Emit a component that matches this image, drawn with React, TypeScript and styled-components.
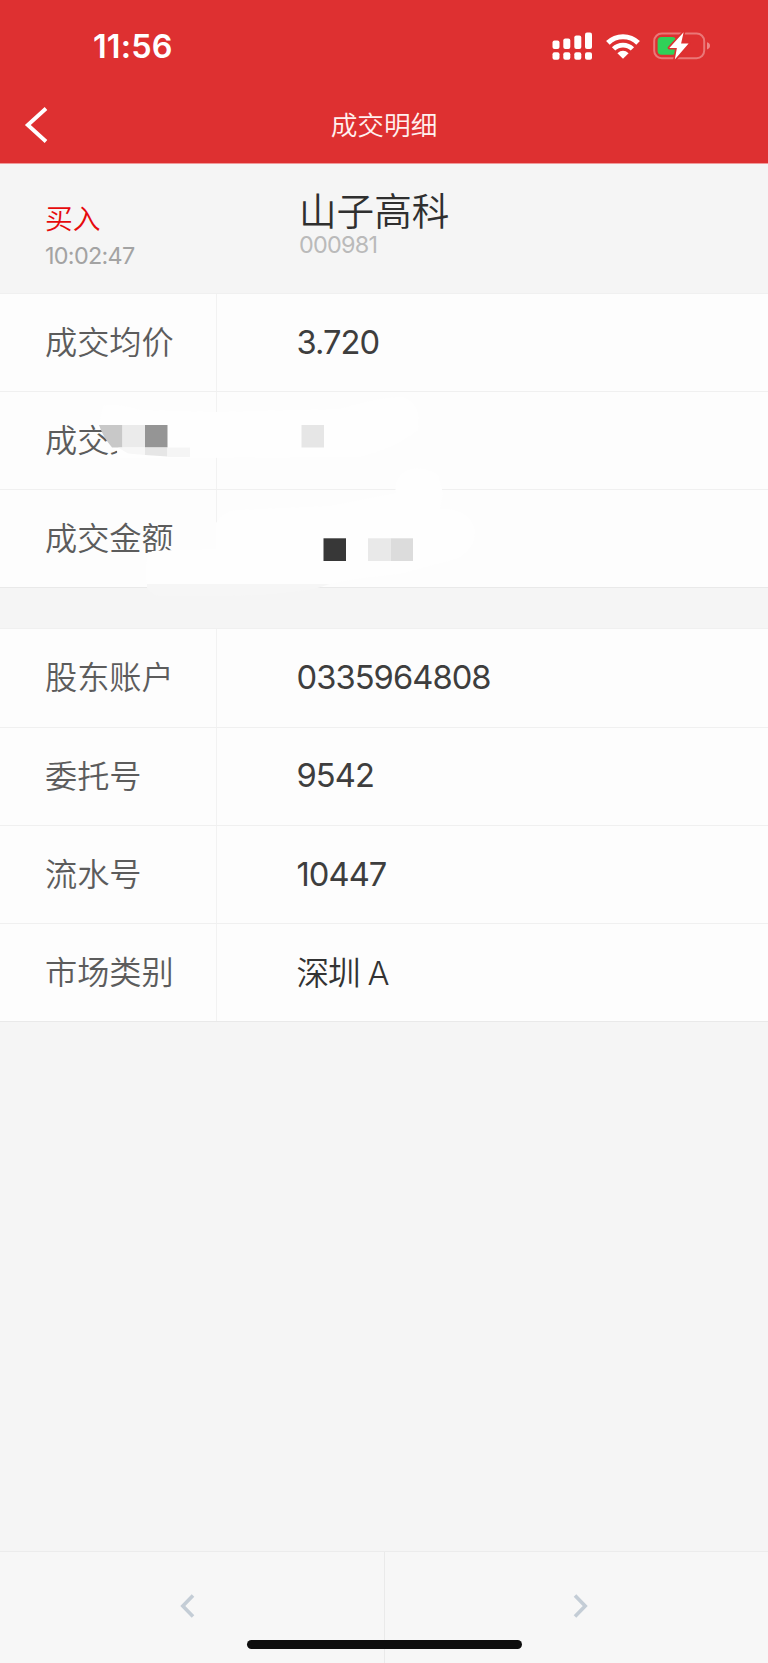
import React from "react";
import styled, { createGlobalStyle } from "styled-components";

const GlobalStyle = createGlobalStyle`
  body {
    margin: 0;
    background: #f5f5f5;
    font-family: Inter, "Noto Sans CJK SC", sans-serif;
  }
`;

const Screen = styled.div`
  display: flex;
  flex-direction: column;
  width: 768px;
  height: 1663px;
  overflow: hidden;
  background: #f5f5f5;
`;

const TopBar = styled.header`
  flex: none;
  height: 164px;
  color: #fff;
  background: #de3031;
  border-bottom: 1px solid #f09a9a;
  box-sizing: border-box;
`;

const StatusBar = styled.div`
  display: flex;
  align-items: center;
  justify-content: space-between;
  height: 92px;
  padding: 0 58px 0 93px;
  box-sizing: border-box;
`;

const Clock = styled.span`
  padding-top: 2px;
  font-size: 32.4px;
  font-weight: 600;
  letter-spacing: 0.15px;
  line-height: 40px;
`;

const StatusIcons = styled.div`
  display: flex;
  align-items: center;
`;

const NavBar = styled.div`
  display: grid;
  grid-template-columns: 100px 1fr 100px;
  align-items: center;
  height: 65px;
`;

const BackButton = styled.button`
  display: flex;
  padding: 0 0 0 24px;
  border: 0;
  color: inherit;
  background: none;
`;

const Title = styled.h1`
  margin: 0;
  font-size: 26.7px;
  font-weight: 350;
  line-height: 38px;
  text-align: center;
  color: #fff0ef;
`;

const Summary = styled.section`
  display: flex;
  flex: none;
  height: 129px;
  box-sizing: border-box;
`;

const TradeSide = styled.div`
  width: 254px;
  padding: 36px 0 0 45px;
`;

const Side = styled.div`
  font-size: 27.8px;
  line-height: 38px;
  color: #e60a0c;
  font-weight: 350;
`;

const Time = styled.div`
  margin-top: 4px;
  font-size: 23.4px;
  line-height: 28px;
  font-weight: 400;
  letter-spacing: -0.7px;
  color: #a3a3a3;
`;

const Security = styled.div`
  padding-top: 27px;
`;

const SecurityName = styled.div`
  font-size: 37.6px;
  line-height: 42px;
  font-weight: 350;
  color: #2f2f2f;
`;

const SecurityCode = styled.div`
  margin-top: -1px;
  font-size: 23.4px;
  line-height: 26px;
  font-weight: 400;
  letter-spacing: -0.75px;
  color: #bababa;
`;

const Card = styled.section<{ $gap?: number }>`
  position: relative;
  flex: none;
  margin-top: ${({ $gap }) => $gap ?? 0}px;
  border-top: 1px solid #f0f0f0;
  background: #fdfdfd;
`;

const Row = styled.div<{ $height: number; $last?: boolean }>`
  display: flex;
  align-items: stretch;
  height: ${({ $height }) => $height}px;
  border-bottom: 1px solid ${({ $last }) => ($last ? "#e9e9e9" : "#f0f0f0")};
  box-sizing: border-box;
`;

const Label = styled.div`
  display: flex;
  align-items: center;
  width: 217px;
  padding: 0 0 5px 45px;
  border-right: 1px solid #f2f2f2;
  box-sizing: border-box;
  font-size: 32.2px;
  font-weight: 350;
  white-space: nowrap;
  color: #5c5c5c;
`;

const Value = styled.div<{ $cjk: boolean }>`
  display: flex;
  align-items: center;
  padding: 0 0 ${({ $cjk }) => ($cjk ? 5 : 2)}px 79.5px;
  font-size: 32.7px;
  font-weight: ${({ $cjk }) => ($cjk ? 350 : 400)};
  letter-spacing: ${({ $cjk }) => ($cjk ? -1.2 : -0.95)}px;
  color: ${({ $cjk }) => ($cjk ? "#333" : "#3e3e3e")};
`;

const Redaction = styled.svg`
  position: absolute;
  left: 0;
  top: 97px;
`;

const Footer = styled.footer`
  position: relative;
  display: grid;
  grid-template-columns: 385px 383px;
  flex: none;
  height: 112px;
  margin-top: auto;
  border-top: 1px solid #ececec;
  background: #f7f7f7;
  box-sizing: border-box;
`;

const PageButton = styled.button<{ $divider?: boolean; $indent: number }>`
  display: flex;
  align-items: flex-start;
  padding: 41px 0 0 ${({ $indent }) => $indent}px;
  border: 0;
  border-right: ${({ $divider }) => ($divider ? "1px solid #eaeaea" : "0")};
  color: #c4cdd6;
  background: none;
`;

const HomeIndicator = styled.div`
  position: absolute;
  left: 247px;
  bottom: 14px;
  width: 275px;
  height: 9px;
  border-radius: 5px;
  background: #0e0e0e;
`;

const WifiDrawing = styled.svg`
  margin-left: 13px;
`;

const BatteryDrawing = styled.svg`
  margin-left: 13.5px;
`;

function SignalIcon() {
  return (
    <svg width="41" height="30" viewBox="0 0 41 30" fill="#fff">
      <rect x="0.5" y="9.5" width="7" height="8.5" rx="2" />
      <rect x="11.3" y="7.5" width="7" height="10.5" rx="2" />
      <rect x="22.3" y="4.5" width="7" height="13.5" rx="2" />
      <rect x="33" y="1.5" width="7" height="16.5" rx="2" />
      <rect x="0.5" y="21.3" width="7" height="7.4" rx="2" />
      <rect x="11.3" y="21.3" width="7" height="7.4" rx="2" />
      <rect x="22.3" y="21.3" width="7" height="7.4" rx="2" />
      <rect x="33" y="21.3" width="7" height="7.4" rx="2" />
    </svg>
  );
}

function WifiIcon() {
  return (
    <WifiDrawing width="34" height="25" viewBox="0 0 34 25">
      <path d="M1.9 8.9 A21.6 21.6 0 0 1 32.1 8.9" fill="none" stroke="#fff" strokeWidth="5.2" />
      <path d="M7.6 14.9 A13.4 13.4 0 0 1 26.4 14.9" fill="none" stroke="#fff" strokeWidth="4.8" />
      <path d="M17 24.8 L11.4 19.3 Q17 14.4 22.6 19.3 Z" fill="#fff" />
    </WifiDrawing>
  );
}

function BatteryIcon() {
  return (
    <BatteryDrawing width="57" height="30" viewBox="0 0 57 30">
      <rect x="1.2" y="2.6" width="50" height="24.6" rx="7.5" fill="none" stroke="#ea7777" strokeWidth="2" />
      <path d="M54 11.2 Q57 12 57 14.8 Q57 17.6 54 18.4 Z" fill="#ee8585" />
      <rect x="4.6" y="6" width="18.5" height="17.8" rx="4" fill="#30d158" />
      <path
        d="M30.6 1.3 L16.3 16.9 H23.9 L21.8 28.6 L35.6 12.5 H28.1 Z"
        fill="#fff"
        stroke="#de3031"
        strokeWidth="3.2"
        strokeLinejoin="round"
        paintOrder="stroke"
      />
    </BatteryDrawing>
  );
}

function MosaicStrokes() {
  return (
    <Redaction width="768" height="210" viewBox="0 391 768 210" aria-hidden="true">
      <path
        d="M99 425 L103 406 Q113 402 140 410 L216 412 L340 409 Q378 397 403 397 Q422 405 418 430 Q395 448 360 457 L190 458 L118 458 L117 451 L112 448 Z"
        fill="#fefefe"
      />
      <path d="M99 425 H122.5 V447.5 H112 Q103 437 99 425 Z" fill="#c8c8c8" />
      <rect x="122.5" y="425" width="22.5" height="22.5" fill="#ebebeb" />
      <rect x="145" y="425" width="22.5" height="22.5" fill="#959595" />
      <path d="M118 447.5 H145 V455 L128 453.5 Z" fill="#f7f7f7" />
      <path d="M145 447.5 H167.5 V456.5 L145 455 Z" fill="#e6e6e6" />
      <rect x="167.5" y="447.5" width="22.5" height="9.5" fill="#f5f5f5" />
      <rect x="301.5" y="425" width="22.5" height="22.5" fill="#e6e6e6" />

      <path
        d="M216 523 Q222 512 236 510 L330 506 L396 493 Q393 480 405 471 Q420 464 438 475 L443 493 L440 509 Q470 508 475 530 Q475 558 440 563 L400 574 Q355 578 330 584 L147 585 Q143 560 152 551 L174 550 L216 549.5 Z"
        fill="#fefefe"
      />
      <rect x="323.5" y="538.3" width="22.5" height="22.7" fill="#373737" />
      <rect x="368" y="538.3" width="22.7" height="22.7" fill="#e9e9e9" />
      <rect x="390.7" y="538.3" width="22.3" height="22.7" fill="#dcdcdc" />
      <path d="M147 584 H330 L314 589 Q270 596 220 596 L158 596 Q150 593 147 588 Z" fill="#f6f6f6" />
    </Redaction>
  );
}

interface Field {
  label: string;
  value: string;
  height: number;
  cjk?: boolean;
}

const dealFields: Field[] = [
  { label: "成交均价", value: "3.720", height: 98 },
  { label: "成交数量", value: "", height: 98 },
  { label: "成交金额", value: "", height: 98 },
];

const accountFields: Field[] = [
  { label: "股东账户", value: "0335964808", height: 98.5 },
  { label: "委托号", value: "9542", height: 98.5 },
  { label: "流水号", value: "10447", height: 98 },
  { label: "市场类别", value: "深圳 A", height: 98, cjk: true },
];

function FieldRows({ fields }: { fields: Field[] }) {
  return (
    <>
      {fields.map((f, i) => (
        <Row key={f.label} $height={f.height} $last={i === fields.length - 1}>
          <Label>{f.label}</Label>
          <Value $cjk={Boolean(f.cjk)}>{f.value}</Value>
        </Row>
      ))}
    </>
  );
}

export default function App() {
  return (
    <>
      <GlobalStyle />
      <Screen>
        <TopBar>
          <StatusBar>
            <Clock>11:56</Clock>
            <StatusIcons>
              <SignalIcon />
              <WifiIcon />
              <BatteryIcon />
            </StatusIcons>
          </StatusBar>
          <NavBar>
            <BackButton aria-label="返回">
              <svg width="24" height="36" viewBox="0 0 24 36" fill="none" stroke="#fff" strokeWidth="3.9">
                <path d="M22 1.5 L3.8 18 L22 34.5" />
              </svg>
            </BackButton>
            <Title>成交明细</Title>
          </NavBar>
        </TopBar>
        <Summary>
          <TradeSide>
            <Side>买入</Side>
            <Time>10:02:47</Time>
          </TradeSide>
          <Security>
            <SecurityName>山子高科</SecurityName>
            <SecurityCode>000981</SecurityCode>
          </Security>
        </Summary>
        <Card>
          <FieldRows fields={dealFields} />
          <MosaicStrokes />
        </Card>
        <Card $gap={40}>
          <FieldRows fields={accountFields} />
        </Card>
        <Footer>
          <PageButton $divider $indent={180} aria-label="上一条">
            <svg width="15" height="26" viewBox="0 0 15 26" fill="none" stroke="currentColor" strokeWidth="3.6">
              <path d="M13 2.5 L2.8 13 L13 23.5" />
            </svg>
          </PageButton>
          <PageButton $indent={188} aria-label="下一条">
            <svg width="15" height="26" viewBox="0 0 15 26" fill="none" stroke="currentColor" strokeWidth="3.6">
              <path d="M2 2.5 L12.2 13 L2 23.5" />
            </svg>
          </PageButton>
          <HomeIndicator />
        </Footer>
      </Screen>
    </>
  );
}
